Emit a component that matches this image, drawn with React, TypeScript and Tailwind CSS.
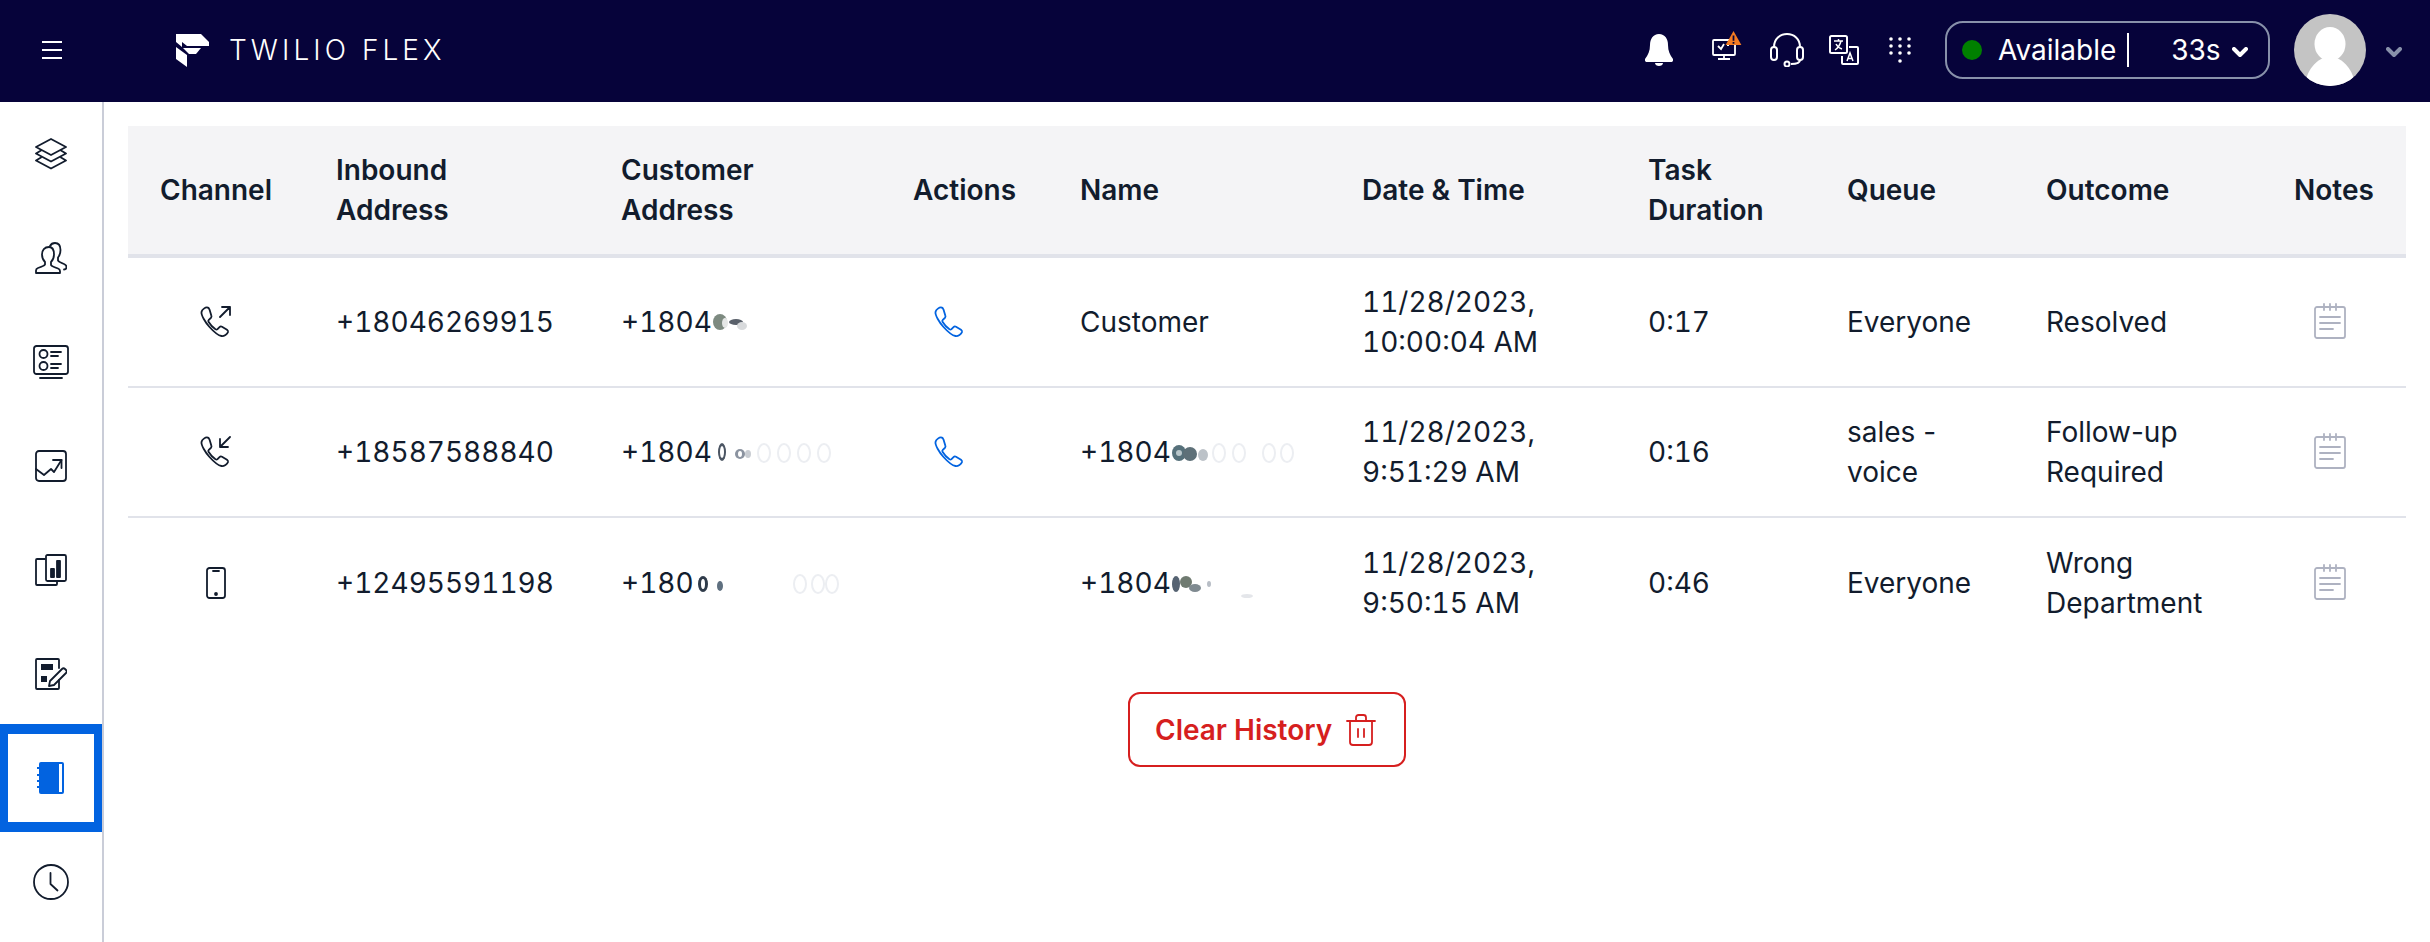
import React from "react";

const Ic = ({ w, h, children, className = "" }: { w: number; h: number; children: React.ReactNode; className?: string }) => (
  <svg width={w} height={h} viewBox={`0 0 ${w} ${h}`} fill="none" stroke="currentColor" strokeWidth={1.8} strokeLinecap="round" strokeLinejoin="round" className={"block shrink-0 " + className}>
    {children}
  </svg>
);

const Layers = () => (
  <Ic w={32} h={32}>
    <path d="M16 1 31 9 16 17 1 9Z" />
    <path d="M6 12.500 1 15.500 16 23.500 31 15.500 26 12.500" />
    <path d="M6 19.500 1 22.500 16 30.500 31 22.500 26 19.500" />
  </Ic>
);
const Users = () => (
  <Ic w={32} h={32}>
    <path d="M14 5c-4.500 0-7 3-7 7.500 0 3 1 5.500 3 7.500v2.500c-1 1.500-4 2.500-7 3.500-1.500.6-2 1.500-2 2.500V31h24v-2c0-1.200-.6-2-2-2.500-3-1-6-2-7-3.500V20c2-2 3-4.500 3-7.500C19 8 18 5 14 5Z" />
    <path d="M15 4c1-2 3-3 5-3 4 0 5.500 3 5.500 7 0 3-.8 5.500-2.500 7.500v3c1 1.500 3.500 2.500 6 3.500 1.500.6 2.500 1.500 2.500 3 0 1.500-1 2.500-2.500 2.500" />
  </Ic>
);
const Card = () => (
  <Ic w={36} h={34}>
    <rect x="1" y="1" width="34" height="28" rx="2.500" />
    <circle cx="10.500" cy="9" r="4" />
    <circle cx="10.500" cy="21" r="4" />
    <path d="M18 7h10M18 11h7M18 19h10M18 23h7M7 33h22" />
  </Ic>
);
const Chart = () => (
  <Ic w={32} h={32}>
    <rect x="1" y="1" width="30" height="30" rx="3" />
    <path d="M1 19l8 6 7-6 3 3 7.500-12" />
    <path d="M18 10h8.500v8" />
  </Ic>
);
const Reports = () => (
  <Ic w={32} h={32}>
    <path d="M10 5H2a1 1 0 0 0-1 1v24a1 1 0 0 0 1 1h19a1 1 0 0 0 1-1v-3" />
    <rect x="11" y="1" width="20" height="26" rx="1.500" />
    <rect x="16" y="15" width="3" height="8" fill="currentColor" />
    <rect x="22" y="7" width="3" height="16" fill="currentColor" />
  </Ic>
);
const FormIc = () => (
  <Ic w={32} h={32}>
    <path d="M24 10V2a1 1 0 0 0-1-1H2a1 1 0 0 0-1 1v28a1 1 0 0 0 1 1h21a1 1 0 0 0 1-1v-8" />
    <rect x="6" y="6" width="12" height="6" fill="currentColor" stroke="none" />
    <rect x="6" y="18" width="6" height="6" fill="currentColor" stroke="none" />
    <path d="M15 23l12-12c1-1 2-1 3 0l1 1c1 1 1 2 0 3L19 27l-5 1Z" />
  </Ic>
);
const Book = () => (
  <svg width="28" height="32" viewBox="0 0 28 32" className="block">
    <rect x="2" y="0" width="25" height="32" rx="2" fill="#0263e0" />
    <rect x="22" y="2" width="3" height="28" fill="#ffffff" />
    <path d="M0 6h3M0 13h3M0 19h3M0 25h3" stroke="#0263e0" strokeWidth="2" />
  </svg>
);
const Clock = () => (
  <Ic w={36} h={36}>
    <circle cx="18" cy="18" r="17" />
    <path d="M17.500 9v11l7 6.500" />
  </Ic>
);
const handset = "M7.500 1.500C5.500 1 2 3.500 1.500 6c-.5 3 3.500 10 8 15 4.500 5 9 8.500 12 9 2.500.4 6-2 6.500-4 .2-1-.3-1.800-1-2.300l-5-3c-1-.5-1.800-.3-2.500.4l-2 2c-.6.6-1.300.6-2 .2-2-1.300-5.500-5-7-7.500-.4-.7-.3-1.400.3-2l2-1.800c.7-.7 1-1.500.5-2.500L9.500 3.500C9 2.300 8.500 1.700 7.500 1.500Z";
const PhoneOut = () => (
  <Ic w={32} h={32}>
    <path d={handset} />
    <path d="M20 11 30 1M22 1h8v8" />
  </Ic>
);
const PhoneIn = () => (
  <Ic w={32} h={32}>
    <path d={handset} />
    <path d="M30 1 20 11M20 3v8h8" />
  </Ic>
);
const Mobile = () => (
  <Ic w={20} h={32}>
    <rect x="1" y="1" width="18" height="30" rx="2.500" />
    <path d="M7 4h6" />
    <circle cx="10" cy="27" r="1" fill="currentColor" />
  </Ic>
);
const PhoneBlue = () => (
  <Ic w={31} h={32} className="text-[#0263e0] ml-[21px]">
    <path d={handset} />
  </Ic>
);
const Note = () => (
  <Ic w={32} h={36} className="text-[#aeb2c1] ml-[19px] -mt-[3px]">
    <rect x="1" y="4" width="30" height="31" rx="2" />
    <path d="M10 1v6M16 1v6M22 1v6M6 14h20M6 20h20M6 26h13" />
  </Ic>
);
const Trash = () => (
  <Ic w={30} h={32}>
    <path d="M1 7h28" />
    <path d="M10 7V3.500C10 2 11 1 12.500 1h5C19 1 20 2 20 3.500V7" />
    <path d="M4 7v21c0 2 1 3 3 3h16c2 0 3-1 3-3V7" />
    <path d="M12 15v8M18 15v8" />
  </Ic>
);

type Blob = [number, number, number, number, string];
const Smudge = ({ w, blobs, ghosts = [] }: { w: number; blobs: Blob[]; ghosts?: number[] }) => (
  <svg width={w} height="30" viewBox={`0 0 ${w} 30`} className="inline-block align-[-6px]" aria-hidden="true">
    {ghosts.map((x) => (
      <ellipse key={x} cx={x} cy="15" rx="6" ry="9" fill="none" stroke="#eceef2" strokeWidth="2" />
    ))}
    {blobs.map(([x, y, rx, ry, c], i) => (
      <ellipse key={i} cx={x} cy={y} rx={rx} ry={ry} fill={c} />
    ))}
  </svg>
);

const nav = [Layers, Users, Card, Chart, Reports, FormIc];

const heads = ["Channel", "Inbound Address", "Customer Address", "Actions", "Name", "Date & Time", "Task Duration", "Queue", "Outcome", "Notes"];
const widths = ["w-[176px]", "w-[285px]", "w-[292px]", "w-[167px]", "w-[282px]", "w-[286px]", "w-[199px]", "w-[199px]", "w-[249px]", "w-[143px]"];

const rows = [
  {
    icon: <PhoneOut />,
    inbound: "+18046269915",
    customer: <>+1804<Smudge w={36} blobs={[[8, 14, 7, 8, "#7d8a80"], [13, 15, 3, 5, "#e5e7e6"], [24, 14, 7, 3, "#59606a"], [30, 18, 5, 4, "#d8dadc"]]} /></>,
    action: true,
    name: <>Customer</>,
    date: ["11/28/2023,", "10:00:04 AM"],
    dur: "0:17",
    queue: ["Everyone"],
    outcome: ["Resolved"],
  },
  {
    icon: <PhoneIn />,
    inbound: "+18587588840",
    customer: <>+1804<Smudge w={126} blobs={[[10, 14, 4, 9, "#4b5563"], [10, 14, 2, 6, "#ffffff"], [28, 16, 5, 5, "#8b93a0"], [28, 16, 2, 3, "#ffffff"], [36, 16, 3, 4, "#c8ccd2"]]} ghosts={[52, 72, 92, 112]} /></>,
    action: true,
    name: <>+1804<Smudge w={126} blobs={[[8, 15, 7, 8, "#56707a"], [8, 15, 3, 3, "#b9c6ca"], [19, 16, 7, 7, "#5e7078"], [32, 17, 5, 6, "#bcc2c8"]]} ghosts={[48, 68, 98, 116]} /></>,
    date: ["11/28/2023,", "9:51:29 AM"],
    dur: "0:16",
    queue: ["sales -", "voice"],
    outcome: ["Follow-up", "Required"],
  },
  {
    icon: <Mobile />,
    inbound: "+12495591198",
    customer: <>+180<Smudge w={146} blobs={[[9, 15, 5, 8, "#2f3b4a"], [9, 15, 2, 5, "#ffffff"], [26, 17, 3, 5, "#5f7080"]]} ghosts={[106, 124, 138]} /></>,
    action: false,
    name: <>+1804<Smudge w={126} blobs={[[5, 15, 4, 8, "#566372"], [15, 13, 6, 6, "#6f7a70"], [24, 19, 6, 4, "#7f8a90"], [38, 15, 2, 3, "#b8bec6"], [76, 27, 6, 2, "#e4e6ea"]]} /></>,
    date: ["11/28/2023,", "9:50:15 AM"],
    dur: "0:46",
    queue: ["Everyone"],
    outcome: ["Wrong", "Department"],
  },
];

const td = "px-8 align-middle font-normal";
const num = " tabular-nums";

export default function App() {
  return (
    <div className="min-h-[942px] bg-white text-[#121c2d] text-[28px] leading-[40px] font-['Inter',sans-serif] flex flex-col">
      <header className="h-[102px] pb-[2px] bg-[#06033a] flex items-center text-white shrink-0">
        <div className="w-[42px]" />
        <svg width="20" height="18" viewBox="0 0 20 18" className="block"><path d="M0 1h20M0 9h20M0 17h20" stroke="#fff" strokeWidth="2" /></svg>
        <div className="w-[114px]" />
        <svg width="33" height="33" viewBox="0 0 33 33" className="block">
          <path d="M0 0H25L33 8V12H11L6 8V13L0 8Z" fill="#fff" />
          <path d="M7 14H25L20 20H13Z" fill="#fff" />
          <path d="M0 13 11 21V33L0 25Z" fill="#fff" />
        </svg>
        <span className="ml-[20px] text-[28px] font-light tracking-[0.145em] whitespace-nowrap">TWILIO FLEX</span>
        <div className="flex-1" />
        <svg width="28" height="32" viewBox="0 0 28 32" className="block"><path d="M14 0c6 0 9 5 9 11 0 6 2 10 5 14 .5 2-.5 3-2 3H2c-1.500 0-2.500-1-2-3 3-4 5-8 5-14C5 5 8 0 14 0ZM10 29h8c0 2-2 3-4 3s-4-1-4-3Z" fill="#fff" /></svg>
        <div className="relative ml-[39px] w-[30px] h-[32px]">
          <svg width="30" height="30" viewBox="0 0 30 30" className="block -mt-[4px]" fill="none" stroke="#fff" strokeWidth="1.800">
            <rect x="1" y="10" width="22" height="15" rx="1" />
            <path d="M12 25v4M6 29h12M6 16l3 3 3-5M15 15h2" />
          </svg>
          <svg width="17" height="14" viewBox="0 0 18 16" className="block absolute -top-[3px] right-0"><path d="M9 0 18 16H0Z" fill="#f47c22" /><path d="M9 5v6M9 12.500v2" stroke="#06033a" strokeWidth="2" /></svg>
        </div>
        <svg width="34" height="34" viewBox="0 0 34 34" className="block ml-[28px]" fill="none" stroke="#fff" strokeWidth="2">
          <path d="M4 14C4 6 10 1 17 1s13 5 13 13" />
          <rect x="1" y="14" width="6" height="13" rx="3" />
          <rect x="27" y="14" width="6" height="13" rx="3" />
          <path d="M30 27c0 3-4 4-9 4" />
          <circle cx="17" cy="31" r="2.500" />
        </svg>
        <svg width="30" height="30" viewBox="0 0 30 30" className="block ml-[25px]" fill="none" stroke="#fff" strokeWidth="2">
          <rect x="1" y="1" width="17" height="17" rx="1.500" />
          <path d="M5 6h9M9.500 4v2M12 6c-1 4-3 7-6 9M7 9c1 2 3 4 6 5" strokeWidth="1.500" />
          <path d="M20 12h8a1 1 0 0 1 1 1v15a1 1 0 0 1-1 1H14a1 1 0 0 1-1-1v-7" />
          <path d="M18 26l3-8 3 8M19 23.500h4" strokeWidth="1.500" />
        </svg>
        <svg width="22" height="26" viewBox="0 0 22 26" className="block ml-[30px]" fill="#fff">
          {[2, 11, 20].map((x) => [2, 9, 16].map((y) => <circle key={x + "-" + y} cx={x} cy={y} r="1.800" />))}
          <circle cx="11" cy="24" r="1.800" />
        </svg>
        <div className="ml-[34px] w-[325px] h-[58px] border-2 border-[#8891aa] rounded-[18px] flex items-center pl-[15px] whitespace-nowrap">
          <span className="w-5 h-5 rounded-full bg-[#008000]" />
          <span className="ml-4">Available</span>
          <span className="ml-[11px] w-[2px] h-[34px] bg-white" />
          <span className="ml-[42px]">33s</span>
          <svg width="16" height="11" viewBox="0 0 16 11" className="block ml-[11px] mt-1" fill="none" stroke="#fff" strokeWidth="4" strokeLinecap="round" strokeLinejoin="round"><path d="M2 2l6 6 6-6" /></svg>
        </div>
        <svg width="72" height="72" viewBox="0 0 72 72" className="block ml-[24px] rounded-full">
          <rect width="72" height="72" fill="#c4c4c4" />
          <ellipse cx="36" cy="30" rx="15.500" ry="17" fill="#fff" />
          <path d="M11 72c1-15 11-28 25-30 14 2 24 15 25 30Z" fill="#fff" />
        </svg>
        <svg width="16" height="11" viewBox="0 0 16 11" className="block ml-[20px] mr-[28px] mt-1" fill="none" stroke="#8891aa" strokeWidth="4" strokeLinecap="round" strokeLinejoin="round"><path d="M2 2l6 6 6-6" /></svg>
      </header>
      <div className="flex flex-1">
        <nav className="w-[104px] shrink-0 border-r-2 border-[#cacdd8] flex flex-col text-[#121c2d]">
          {nav.map((I, i) => (
            <div key={i} className="h-[104px] flex items-center justify-center"><I /></div>
          ))}
          <div className="h-[108px] -my-[2px] border-x-8 border-y-[10px] border-[#0263e0] flex items-center justify-center"><Book /></div>
          <div className="h-[104px] flex items-center justify-center"><Clock /></div>
        </nav>
        <main className="flex-1 pt-6 px-6 flex flex-col items-center">
          <table className="w-[2278px] table-fixed border-separate border-spacing-0">
            <colgroup>{widths.map((w) => <col key={w} className={w} />)}</colgroup>
            <thead>
              <tr className="bg-[#f4f4f6]">
                {heads.map((h) => (
                  <th key={h} className="h-[132px] px-8 text-left font-semibold border-b-4 border-[#e1e3ea] last:pl-[31px]">{h}</th>
                ))}
              </tr>
            </thead>
            <tbody>
              {rows.map((r, i) => {
                const b = i < 2 ? " border-b-2 border-[#e1e3ea]" : "";
                return (
                  <tr key={r.inbound}>
                    <td className={td + b + " h-[130px]"}><div className="flex justify-center -mx-8">{r.icon}</div></td>
                    <td className={td + b + num}>{r.inbound}</td>
                    <td className={td + b + num + " whitespace-nowrap"}>{r.customer}</td>
                    <td className={td + b}>{r.action ? <PhoneBlue /> : null}</td>
                    <td className={td + b + num + " whitespace-nowrap"}>{r.name}</td>
                    <td className={td + b + num}>{r.date.map((d) => <div key={d} className="whitespace-nowrap">{d}</div>)}</td>
                    <td className={td + b + num}>{r.dur}</td>
                    <td className={td + b}>{r.queue.map((d) => <div key={d}>{d}</div>)}</td>
                    <td className={td + b}>{r.outcome.map((d) => <div key={d}>{d}</div>)}</td>
                    <td className={td + b}><Note /></td>
                  </tr>
                );
              })}
            </tbody>
          </table>
          <button className="mt-[44px] w-[278px] h-[75px] border-2 border-[#d61f1f] rounded-[12px] text-[#d61f1f] font-semibold flex items-center justify-start pl-[25px] gap-[14px] whitespace-nowrap">
            Clear History <Trash />
          </button>
        </main>
      </div>
    </div>
  );
}
